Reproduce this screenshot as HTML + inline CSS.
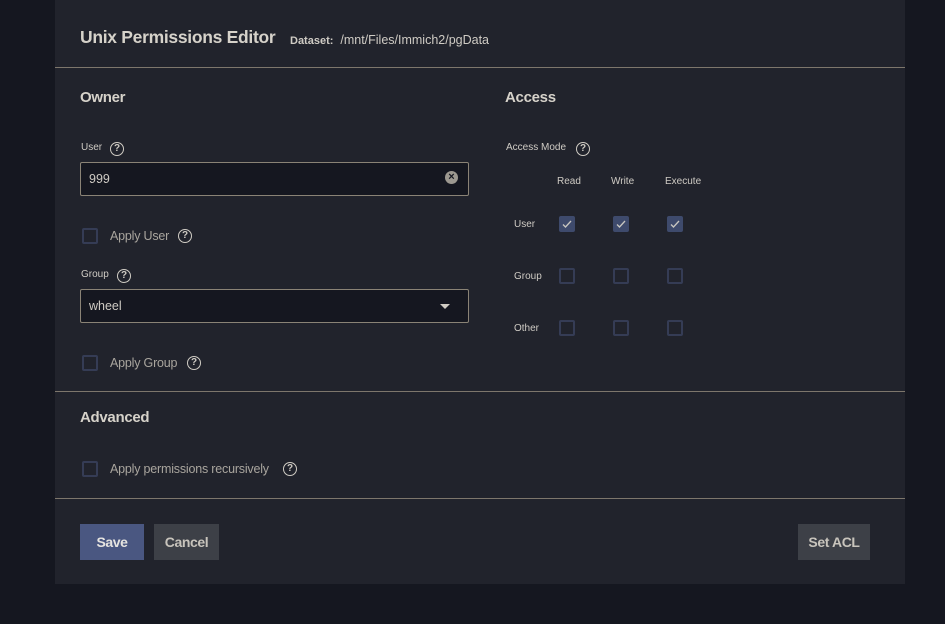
<!DOCTYPE html>
<html><head><style>
*{margin:0;padding:0;box-sizing:border-box}
body{width:945px;height:624px;background:#151720;font-family:"Liberation Sans",sans-serif;color:#cfcbc4;position:relative;overflow:hidden}
.p{position:absolute;left:55px;top:0;width:850px;height:584px;background:#21232c}
.a{position:absolute;white-space:nowrap}
.hr{position:absolute;left:55px;width:850px;height:1px;background:#7d766c}
.h{font-size:15px;font-weight:bold;color:#d6d2ca;letter-spacing:-0.3px}
.lb{font-size:10px}
.in{position:absolute;left:80px;width:389px;height:34px;background:#151720;border:1px solid #8a8376;border-radius:2px;font-size:12.5px;padding:9px 8px}
.cb{position:absolute;width:16px;height:16px;border:2px solid #353c55;border-radius:2px}
.ck{background:#3e4a6c;border-color:#3e4a6c}
.ck svg{position:absolute;left:0px;top:0px}
.q{position:absolute;width:14px;height:14px;border:1.5px solid #d0ccc4;border-radius:50%;font-size:10px;font-weight:bold;text-align:center;line-height:11px}
.cl{font-size:12.5px;color:#a9a59e;letter-spacing:-0.2px}
.btn{position:absolute;height:36px;font-size:14px;font-weight:bold;text-align:center;line-height:36px;letter-spacing:-0.4px}
</style></head><body>
<div class="p"></div>
<div class="a" style="left:80px;top:27px;font-size:17.5px;font-weight:bold;color:#d6d2ca;letter-spacing:-0.3px">Unix Permissions Editor</div>
<div class="a" style="left:290px;top:33px;font-size:12.5px"><b style="font-size:11px">Dataset:</b>&nbsp; /mnt/Files/Immich2/pgData</div>
<div class="hr" style="top:67px"></div>
<div class="a h" style="left:80px;top:89px">Owner</div>
<div class="a h" style="left:505px;top:89px">Access</div>
<div class="a lb" style="left:81px;top:142px">User</div><div class="q" style="left:110px;top:142px">?</div>
<div class="in" style="top:162px">999</div>
<div class="a" style="left:445px;top:171px;width:13px;height:13px;border-radius:50%;background:#9c9890;color:#151720;font-size:11px;font-weight:bold;text-align:center;line-height:13px">×</div>
<div class="cb" style="left:82px;top:228px"></div><div class="a cl" style="left:110px;top:229px">Apply User</div><div class="q" style="left:178px;top:229px">?</div>
<div class="a lb" style="left:81px;top:269px">Group</div><div class="q" style="left:117px;top:269px">?</div>
<div class="in" style="top:289px">wheel</div>
<div class="a" style="left:440px;top:304px;border-left:5px solid transparent;border-right:5px solid transparent;border-top:5px solid #d0ccc4"></div>
<div class="cb" style="left:82px;top:355px"></div><div class="a cl" style="left:110px;top:356px">Apply Group</div><div class="q" style="left:187px;top:356px">?</div>
<div class="a lb" style="left:506px;top:142px">Access Mode</div><div class="q" style="left:576px;top:142px">?</div>
<div class="a lb" style="left:557px;top:176px">Read</div>
<div class="a lb" style="left:611px;top:176px">Write</div>
<div class="a lb" style="left:665px;top:176px">Execute</div>
<div class="a lb" style="left:514px;top:219px">User</div>
<div class="a lb" style="left:514px;top:271px">Group</div>
<div class="a lb" style="left:514px;top:323px">Other</div>
<div class="cb ck" style="left:559px;top:216px"><svg width="12" height="12"><path d="M2 6.5l2.5 2.5L10 3" stroke="#c8c6c0" stroke-width="1.3" fill="none"/></svg></div>
<div class="cb ck" style="left:613px;top:216px"><svg width="12" height="12"><path d="M2 6.5l2.5 2.5L10 3" stroke="#c8c6c0" stroke-width="1.3" fill="none"/></svg></div>
<div class="cb ck" style="left:667px;top:216px"><svg width="12" height="12"><path d="M2 6.5l2.5 2.5L10 3" stroke="#c8c6c0" stroke-width="1.3" fill="none"/></svg></div>
<div class="cb" style="left:559px;top:268px"></div><div class="cb" style="left:613px;top:268px"></div><div class="cb" style="left:667px;top:268px"></div>
<div class="cb" style="left:559px;top:320px"></div><div class="cb" style="left:613px;top:320px"></div><div class="cb" style="left:667px;top:320px"></div>
<div class="hr" style="top:391px"></div>
<div class="a h" style="left:80px;top:409px">Advanced</div>
<div class="cb" style="left:82px;top:461px"></div><div class="a cl" style="left:110px;top:462px">Apply permissions recursively</div><div class="q" style="left:283px;top:462px">?</div>
<div class="hr" style="top:498px"></div>
<div class="btn" style="left:80px;top:524px;width:64px;background:#4a5781;color:#e6e4e0">Save</div>
<div class="btn" style="left:154px;top:524px;width:65px;background:#3d4047;color:#c8c4bc">Cancel</div>
<div class="btn" style="left:798px;top:524px;width:72px;background:#3d4047;color:#c8c4bc">Set ACL</div>
</body></html>
